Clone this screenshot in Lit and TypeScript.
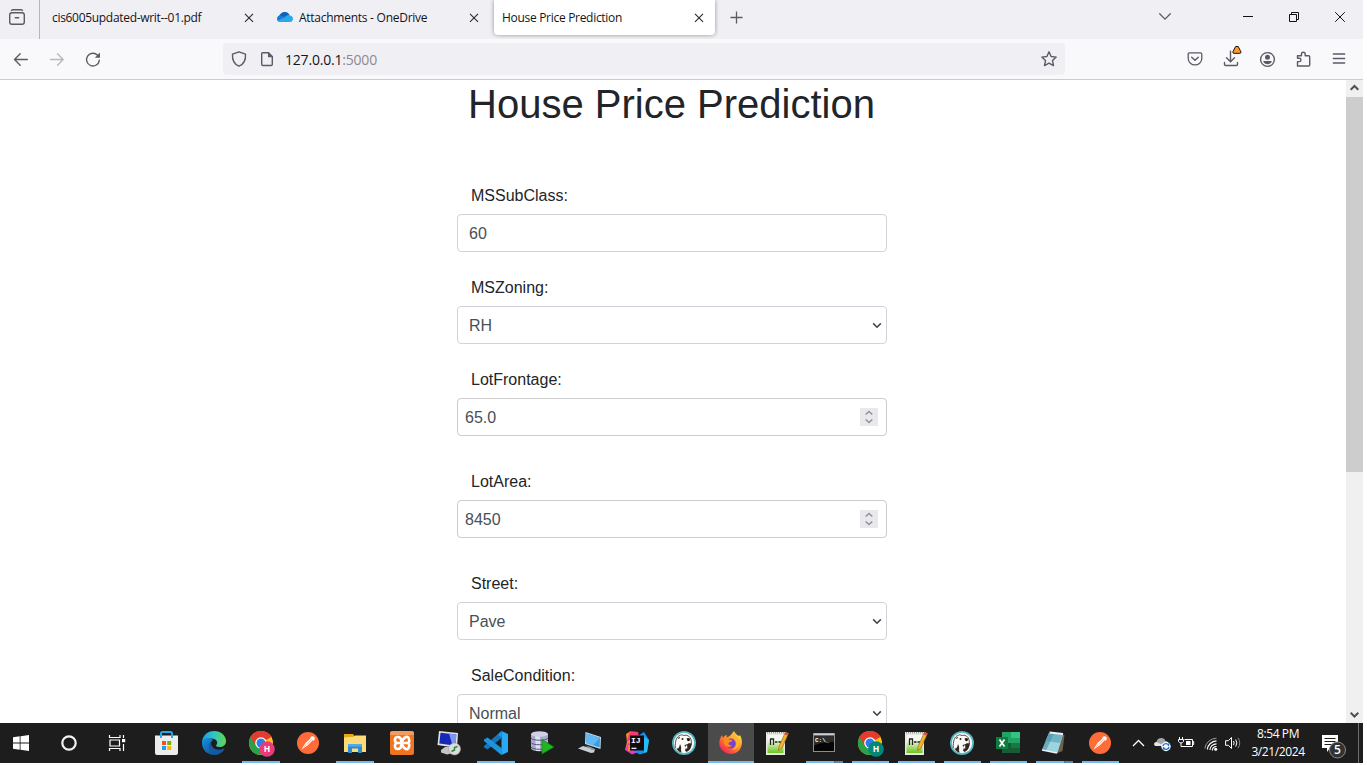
import { LitElement, html, svg, css, nothing } from "lit";
import { customElement } from "lit/decorators.js";

const icon = (w: number, h: number, body: unknown, cls = "") =>
  html`<svg class="ic ${cls}" width=${w} height=${h} viewBox="0 0 ${w} ${h}" fill="none">${body}</svg>`;

const closeGlyph = icon(10, 10, svg`<path d="M1 .8l8 8M9 .8l-8 8" stroke="#2b2a33" stroke-width="1.1"/>`);

const store = svg`
  <path d="M0 4.500h23V22a2 2 0 0 1-2 2H2a2 2 0 0 1-2-2z" fill="#ededed"/>
  <path d="M6 7V2.500Q6 1 7.500 1h8Q17 1 17 2.500V7" stroke="#23a8e8" stroke-width="2"/>
  <path d="M7 10h4v4H7z" fill="#f1511b"/><path d="M12.200 10h4v4h-4z" fill="#6bb313"/>
  <path d="M7 15h4v4H7z" fill="#1ba0ea"/><path d="M12.200 15h4v4h-4z" fill="#fbb80b"/>`;

const edge = svg`
  <defs>
    <linearGradient id="ea" x1="0" y1="8" x2="24" y2="8" gradientUnits="userSpaceOnUse"><stop stop-color="#1b9de2"/><stop offset=".5" stop-color="#2fc4c9"/><stop offset="1" stop-color="#65d848"/></linearGradient>
    <linearGradient id="eb" x1="4" y1="8" x2="16" y2="24" gradientUnits="userSpaceOnUse"><stop stop-color="#1688d8"/><stop offset="1" stop-color="#114a8b"/></linearGradient>
  </defs>
  <path d="M0 11C.5 4.500 5.500 0 12 0c7 0 12 4.600 12 10 0 4-3 6-6.500 6-3 0-4-1-3-2.300C16.500 11 14 7.500 9.500 7.500 4.500 7.500 1 10 0 13z" fill="url(#ea)"/>
  <path d="M0 12c0 7 5.400 12 12 12 4.500 0 8.300-2.400 10.300-5.700.3-.6-.2-.9-.7-.6-6 3-12.600-.2-12.600-5.200 0-1.700.9-3 2-3.800C5.500 5.500 0 8 0 12z" fill="url(#eb)"/>
  <path d="M11 8.700c-3 1.300-4.500 4-4 7.300.7 4.300 4 7.300 7.500 7.700 3.300-.7 6.200-2.700 7.800-5.400.3-.6-.2-.9-.7-.6-6 3-12.600-.2-12.600-5.200 0-1.700.9-3 2-3.800z" fill="#1558a5"/>`;

const chrome = (badge: string) => svg`
  <circle cx="12" cy="12" r="12" fill="#fbc116"/>
  <path d="M12 12L1.600 6A12 12 0 0 1 22.400 6z" fill="#e33b2e"/>
  <path d="M12 12L1.600 6A12 12 0 0 0 12 24l5.200-9z" fill="#28a148"/>
  <path d="M12 6h10.400A12 12 0 0 0 1.600 6l5.200 9z" fill="#e33b2e"/>
  <circle cx="12" cy="12" r="5.800" fill="#fff"/><circle cx="12" cy="12" r="4.500" fill="#2f7de9"/>
  <circle cx="18" cy="18" r="7.800" fill=${badge}/>
  <text x="18" y="21" text-anchor="middle" class="badge-letter" fill="#fff">H</text>`;

const postman = svg`
  <circle cx="12" cy="12" r="11" fill="#ff6c37"/>
  <path d="M5.500 18.500l4-6.500 5-4.500 2 2-5 5z" fill="#fff"/><circle cx="16.500" cy="7.500" r="2.300" fill="#fff"/>
  <path d="M8 15.800l7-6.600M14.800 7.800l2 1.500" stroke="#f9a88a" stroke-width=".8"/>`;

const explorer = svg`
  <path d="M1 3h9l1.500 2H23v16H1z" fill="#e8a712"/><path d="M1 6.500L10.500 5.800 12 4.500h11V21H1z" fill="#fddb78"/>
  <path d="M5 13h14v9h-4v-4.500H9V22H5z" fill="#2f8bd0"/><path d="M5 13h14v2.500H5z" fill="#55abe8"/>`;

const xampp = svg`
  <rect width="24" height="24" rx="2.500" fill="#ee7623"/><path d="M0 2.500Q0 0 2.500 0h19Q24 0 24 2.500V4H0z" fill="#f59b5c"/>
  <path d="M11.800 12H6.500Q4.500 10.500 5 8.200T8 6t3 2.500 1 3.500q0-2 1-3.500T16 6t3 2.200-1.500 3.800H12M11.800 12H6.500Q4.500 13.500 5 15.800T8 18t3-2.500 1-3.500q0 2 1 3.500t3 2.500 3-2.200-1.500-3.800" stroke="#fff" stroke-width="2.600" stroke-linejoin="round"/>`;

const winscp = svg`
  <path d="M2 0l19 2-1 15L.5 14z" fill="#dfe3e8"/><path d="M3.500 1.700l15.800 1.700-.8 11.400-16.200-2.300z" fill="#1528b8"/>
  <path d="M12 2.600l7.300.8-.8 11.400-3-.4z" fill="#7e97ee"/><path d="M4 19l4-3h7l1 6-6 1.500-6-2z" fill="#c3c5c7"/>
  <circle cx="17.500" cy="18" r="6" fill="#d9dedb" stroke="#9a9fa0" stroke-width=".6"/><path d="M14.500 20.500l3-1.500v-2.500l3-1" stroke="#32803b" stroke-width="1.500"/>`;

const vscode = svg`
  <path d="M17.500 0L24 3v18l-6.500 3z" fill="#29a9f2"/><path d="M17.500 0v7L3.500 18.500 0 16.500v-1.500z" fill="#1476bd"/>
  <path d="M17.500 24v-7L3.500 6.500 0 8.500V10z" fill="#1e94dc"/><path d="M17.500 0L14 3.500l3.500 3V17L14 20.500l3.500 3.500z" fill="#1f9de8"/>`;

const database = svg`
  <path d="M0 3v14c0 4.300 17 4.300 17 0V3z" fill="#a9abce"/><path d="M4 3h5v17H5z" fill="#e0e1ef"/><ellipse cx="8.500" cy="3" rx="8.500" ry="2.800" fill="#cfd0e6"/>
  <path d="M0 7c1 3 16 3 17 0M0 11.500c1 3 16 3 17 0M0 16c1 3 16 3 17 0" stroke="#55567c"/>
  <path d="M11 8.500L23 16 11 23z" fill="#21b521" stroke="#0b7a10" stroke-width=".7"/>`;

const computer = svg`
  <path d="M7.500 1L23 6l-.5 12L7 13z" fill="#c3dcec"/><path d="M8.500 2.500L22 6.800 21.700 16.500 8 12z" fill="#3b9ce0"/>
  <path d="M8.500 2.500L22 6.800l-7 7.500-7-2.300z" fill="#63b8f0"/><path d="M0 17.500l5-2.500 5 1.500 7 1.500-1 3.500-3 .5z" fill="#c6cdd3"/><path d="M7 14.500l6 1.500 4 2.500-3 .5z" fill="#8b9299"/>`;

const intellij = svg`
  <path d="M1 3l4-2.500L13 1l-2 12L0 19l2-8z" fill="#f98a2f"/><path d="M5 .5L13 1l1 5-9 3-3.500 2z" fill="#fb3a74"/>
  <path d="M0 19l3-7 9 3 1 6-6 2.500z" fill="#e03cc4"/><path d="M3 14l3 0 2 5-5 1z" fill="#fc8136"/>
  <path d="M13 5l6-4 5 8-2 12-7 2.500-6-3z" fill="#1593f3"/><path d="M19 6l5 3-2 12-3 1z" fill="#23bdf3"/>
  <path d="M5 4.500h14v15H5z" fill="#120b0e"/><path d="M6.500 17.300h5" stroke="#fff" stroke-width="1.200"/>
  <text x="6" y="12" class="ij" fill="#fff">IJ</text>`;

const dbeaver = svg`
  <circle cx="12" cy="12" r="12" fill="#53b6bf"/><circle cx="12" cy="12" r="10.200" fill="#fbfbfa"/>
  <path d="M3.300 17C3 10 4.500 5.500 8 4.500c1-1 2.500-.8 3 0 2.500-.7 5.500-.3 7 2 1.500 2 1.700 5 .7 8" stroke="#4a3b36" stroke-width=".9"/>
  <path d="M4.500 17.500c2 .5 3-1.500 3.500-4.500 1 2 1.500 3.500 1 6l.5 2.500c-2.500-.5-4-2-5-4z" fill="#35261f"/>
  <path d="M12.500 14.500c1-1.500 3-.5 4.500-2.500 1 .8 2 .5 2.500-.5.800 4-1.500 8-5 9.500l-1.500-1.500 1-3z" fill="#35261f"/>
  <path d="M14.500 7.500q2.500-1.200 3.700.8-.5 2.400-2.700 1.700z" fill="#241a16"/><circle cx="10.500" cy="8" r="1" fill="#2c211e"/>
  <path d="M6 7.500q.5-2 2-1.500L7 8z" fill="#35261f"/><path d="M14.500 14.500v3" stroke="#fff" stroke-width="1.500"/>`;

const firefox = svg`
  <defs><linearGradient id="ff" x1="20" y1="2" x2="4" y2="22" gradientUnits="userSpaceOnUse"><stop stop-color="#ffe546"/><stop offset=".45" stop-color="#ff8f24"/><stop offset="1" stop-color="#f41c5c"/></linearGradient></defs>
  <path d="M15 0c1 2.500 3 3.500 4.500 5l1.500-.8C23.500 8 24 15 20 19.500c-4 4.500-11.500 4.500-16 .5C.500 17-.5 12 1 8c.500-1.500 1-2.700 2-3.700L4 7c.700-1.600 2-2.600 4-3l-.5 2.500C10 5.500 12.500 4 15 0z" fill="url(#ff)"/>
  <circle cx="11.700" cy="12.500" r="5" fill="#7542d5"/><path d="M4.500 7.500c2-.5 5-.5 6 1l3 .5c-.5 2-2.500 2-3.500 2.500-1.500 1.800 1 3.500 3 2.500-1 3-7 3-8-2z" fill="#ff8a1e"/>
  <path d="M13 5c3 1 4.500 4 4.500 7s-2 6-5 7c7.500 0 9.500-8 6.500-12-2-2-3-3-4-5z" fill="#ffb52c"/>`;

const npp = svg`
  <defs><linearGradient id="np" x1="0" y1="3" x2="0" y2="23" gradientUnits="userSpaceOnUse"><stop offset=".3" stop-color="#f4f8ee"/><stop offset="1" stop-color="#62c20c"/></linearGradient></defs>
  <path d="M1 1h19v23H1z" fill="#e6e8e2"/><path d="M2.500 4h16v18h-16z" fill="url(#np)"/><path d="M2 1.800h17" stroke="#777" stroke-dasharray="1 1"/>
  <path d="M5.500 14V8M5 8h3.500v6M10 11h2.500M13.500 11h2.500" stroke="#222" stroke-width="1.300"/>
  <path d="M20.500 1l3 1.500L17 17l-3.500 2.500.5-4z" fill="#f1b72b" stroke="#935b15" stroke-width=".6"/><path d="M20.500 1l3 1.500-1 2.200-3-1.500z" fill="#db4b49"/>`;

const cmd = svg`
  <path d="M1 2h22v19H1z" fill="#8a8d91"/><path d="M2 2.500h20v2H2z" fill="#cbd0d6"/><path d="M2 4.700h20V20H2z" fill="#050505"/><path d="M2 4.700h20v6c-8 0-14 1-20 4z" fill="#2c2c2c"/>
  <text x="3" y="11" class="cmd" fill="#fff">C:\\_</text>`;

const excel = svg`
  <path d="M6 1h9v6H6zM6 7h9v5H6z" fill="#21a366"/><path d="M15 1h9v6h-9z" fill="#33c481"/><path d="M15 7h9v5h-9z" fill="#21a366"/>
  <path d="M6 12h18v10H6z" fill="#185c37"/><path d="M15 12h9v5h-9z" fill="#107c41"/><path d="M0 6h12v12H0z" fill="#107c41"/>
  <path d="M3.500 8.500l5 7M8.500 8.500l-5 7" stroke="#fff" stroke-width="1.700"/>`;

const notepad = svg`
  <path d="M17 2l5.500 2-2 16-5 2z" fill="#6f6048"/><path d="M7 2L21 3.500 15.500 22 0 19z" fill="#9bd3de"/><path d="M7 2L21 3.500l-3 8.500L3.500 10z" fill="#6fb4c4"/>
  <path d="M12 2.500l-8 17L0 19 7 2z" fill="#4c93a5" opacity=".6"/><path d="M7.500 1.500L21 3" stroke="#edf3f5" stroke-width="1.800"/><path d="M0 19l15 3" stroke="#eef" stroke-width="1.400"/>`;

type App = { art: unknown; mark?: "one" | "many"; kind?: string };
const apps: App[] = [
  { art: store }, { art: edge }, { art: chrome("#e93a7a"), mark: "one" }, { art: postman },
  { art: explorer, mark: "one" }, { art: xampp }, { art: winscp }, { art: vscode, mark: "one" },
  { art: database }, { art: computer }, { art: intellij }, { art: dbeaver },
  { art: firefox, mark: "one", kind: "active" }, { art: npp }, { art: cmd, mark: "many", kind: "narrow" },
  { art: chrome("#00897b"), mark: "one", kind: "narrow" }, { art: npp, mark: "one", kind: "narrow" },
  { art: dbeaver, mark: "one", kind: "narrow" }, { art: excel, mark: "one", kind: "narrow" },
  { art: notepad, mark: "many", kind: "narrow" }, { art: postman, mark: "one", kind: "narrow" },
];

type Field = { label: string; value: string; type: "text" | "select" | "number" };
const fields: Field[] = [
  { label: "MSSubClass:", value: "60", type: "text" },
  { label: "MSZoning:", value: "RH", type: "select" },
  { label: "LotFrontage:", value: "65.0", type: "number" },
  { label: "LotArea:", value: "8450", type: "number" },
  { label: "Street:", value: "Pave", type: "select" },
  { label: "SaleCondition:", value: "Normal", type: "select" },
];

@customElement("tab-strip")
class TabStrip extends LitElement {
  static styles = css`
    :host { display: flex; height: 39px; background: #f0eff4; font: 12px "Open Sans", "Noto Sans", sans-serif; color: #15141a; }
    .ic { display: block; flex: none; overflow: visible; }
    .view { width: 40px; border-right: 1px solid #b5b4bb; padding: 8px 0 0 8px; box-sizing: border-box; flex: none; }
    .tab { display: flex; align-items: center; box-sizing: border-box; width: 225px; height: 35px; padding: 0 11px 0 12px; flex: none; white-space: nowrap; }
    .fav { margin-right: 6px; }
    .name { flex: 1; letter-spacing: -0.31px; line-height: 16px; padding-top: 1px; }
    .drive { letter-spacing: -0.26px; }
    .active { width: 221px; margin-left: 4px; padding-left: 8px; background: #fff; border-radius: 0 0 4px 4px; box-shadow: 0 0 4px rgba(0, 0, 0, 0.4); }
    .active .name { letter-spacing: -0.3px; }
    .plus { margin: 11px 0 0 15px; }
    .controls { display: flex; margin-left: auto; padding: 11px 18px 0 0; gap: 36px; }
    .list { margin-right: 36px; }
  `;
  render() {
    return html`
      <div class="view">${icon(18, 18, svg`<path d="M3.500 2.500Q4 1.700 5 1.700h8q1 0 1.500.8" stroke="#5b5b66" stroke-width="1.400" stroke-linecap="round"/><rect x="1.700" y="4.700" width="14.600" height="11.600" rx="2.200" stroke="#5b5b66" stroke-width="1.400"/><path d="M7.300 9.700h3.400" stroke="#5b5b66" stroke-width="1.400" stroke-linecap="round"/>`)}</div>
      <div class="tab"><span class="name">cis6005updated-writ--01.pdf</span>${closeGlyph}</div>
      <div class="tab">
        ${icon(16, 16, svg`<path d="M1.500 8.500C2 4 5 1.800 8 2c2.500.2 4 1.600 4.700 3.500L9 8z" fill="#0a64bd"/><path d="M0 9c0-2.300 1.500-3.700 3.500-3.800L8 7l-4.500 5C1.500 12 0 11 0 9z" fill="#147bd1"/><path d="M8 7c2-2 4-2.500 5-1.500 2 .3 3 1.700 3 3.300 0 2-1.300 3.200-3 3.200H3.300C2 12 1 11.200.8 10.500z" fill="#2aa7ea"/>`, "fav")}
        <span class="name drive">Attachments - OneDrive</span>${closeGlyph}
      </div>
      <div class="tab active"><span class="name">House Price Prediction</span>${closeGlyph}</div>
      ${icon(13, 13, svg`<path d="M6.500 .5v12M.5 6.500h12" stroke="#5b5b66" stroke-width="1.300"/>`, "plus")}
      <div class="controls">
        ${icon(12, 10, svg`<path d="M.7 2.800L6 8.100l5.300-5.300" stroke="#5b5b66" stroke-width="1.300" stroke-linecap="round"/>`, "list")}
        ${icon(10, 11, svg`<path d="M0 5.500h10" stroke="#111"/>`)}
        ${icon(10, 11, svg`<path d="M.5 3.500h7v7h-7zM2.500 3V1.500h7v7H8" stroke="#111"/>`)}
        ${icon(10, 11, svg`<path d="M.2 1.200l9.600 9.600M9.800 1.200L.2 10.800" stroke="#111"/>`)}
      </div>`;
  }
}

@customElement("nav-bar")
class NavBar extends LitElement {
  static styles = css`
    :host { display: flex; align-items: center; box-sizing: border-box; height: 41px; border-bottom: 1px solid #cccccf; background: #f9f9fb; padding: 0 16px 0 13px; gap: 20px; }
    .ic { display: block; flex: none; overflow: visible; }
    .url { display: flex; align-items: center; box-sizing: border-box; width: 842px; height: 32px; margin: 0 102px; padding: 0 8px; border-radius: 4px; background: #f0eff4; font: 14px "Open Sans", "Noto Sans", sans-serif; color: #15141a; }
    .page { margin-left: 12px; }
    .addr { margin-left: 10px; flex: 1; letter-spacing: -0.2px; line-height: 20px; padding-top: 1px; }
    .port { color: #8b8a93; }
  `;
  render() {
    const s = "#5b5b66";
    return html`
      ${icon(16, 16, svg`<path d="M14.300 8.500H1.500M7.200 2.800L1.500 8.500l5.700 5.700" stroke=${s} stroke-width="1.400" stroke-linecap="round" stroke-linejoin="round"/>`)}
      ${icon(16, 16, svg`<path d="M1.500 8.500H14M8.500 2.800l5.700 5.700-5.700 5.700" stroke="#b9b9be" stroke-width="1.400" stroke-linecap="round" stroke-linejoin="round"/>`)}
      ${icon(16, 16, svg`<path d="M14.300 9.300A6.400 6.400 0 1 1 12.600 4.200" stroke=${s} stroke-width="1.400" stroke-linecap="round"/><path d="M15 1.500v5.200H9.800z" fill=${s}/>`)}
      <div class="url">
        ${icon(16, 16, svg`<path d="M8 .8L14.500 3.200c.3 4.800-1.500 10-6.500 12C3 13.200 1.200 8 1.500 3.200z" stroke=${s} stroke-width="1.400" stroke-linejoin="round"/>`)}
        ${icon(16, 16, svg`<path d="M3.500 1.700h6L13.300 5.500v7.800q0 1.200-1.200 1.200H3.900q-1.200 0-1.200-1.200V2.500q0-.8.800-.8z" stroke=${s} stroke-width="1.400"/><path d="M9 1.500v4.700h4.500z" fill=${s}/>`, "page")}
        <span class="addr">127.0.0.1<span class="port">:5000</span></span>
        ${icon(16, 16, svg`<path d="M8 .8l2.100 4.700 5.100.6-3.700 3.500 1 5L8 12.200l-4.500 2.400 1-5L.8 6.100l5.100-.6z" stroke=${s} stroke-width="1.400" stroke-linejoin="round"/>`)}
      </div>
      ${icon(16, 16, svg`<path d="M2.500 1.900h11q1.300 0 1.300 1.300v4c0 9-13.600 9-13.600 0v-4q0-1.300 1.300-1.300z" stroke=${s} stroke-width="1.300"/><path d="M4.700 6.200L8 9.300l3.300-3.100" stroke=${s} stroke-width="1.400" stroke-linecap="round"/>`)}
      ${icon(16, 16, svg`<path d="M7.500 .3v10M3.500 6.700l4 4 4-4M1.500 11.500v2q0 1 1 1h11q1 0 1-1v-2" stroke=${s} stroke-width="1.400" stroke-linecap="round"/><path d="M12.600-4.500h2.600l2.700 5.300q.2 1.500-1 1.500h-6q-1.300 0-1-1.500z" fill="#ff9a2b" stroke="#111" stroke-linejoin="round"/>`)}
      ${icon(16, 16, svg`<circle cx="8.500" cy="8.500" r="6.900" stroke=${s} stroke-width="1.400"/><circle cx="8.500" cy="6.300" r="2.500" fill=${s}/><path d="M4.300 10h8.400c0 4.200-8.400 4.200-8.400 0z" fill=${s}/>`)}
      ${icon(16, 16, svg`<path d="M2.500 15V10.600h1.800c2.200 0 2.200-3.400 0-3.400H2.500V4.700h4V3c0-2.400 3.700-2.400 3.700 0v1.700h3.500q1 0 1 1V14q0 1-1 1z" stroke=${s} stroke-width="1.400" stroke-linejoin="round"/>`)}
      ${icon(16, 16, svg`<path d="M2.300 3h11.400M2.300 7.500h11.400M2.300 12h11.400" stroke=${s} stroke-width="1.300" stroke-linecap="round"/>`)}
    `;
  }
}

@customElement("price-form")
class PriceForm extends LitElement {
  static styles = css`
    :host { display: flex; height: 643px; overflow: hidden; background: #fff; font: 16px/24px "Liberation Sans", Arial, sans-serif; color: #212529; }
    .ic { display: block; flex: none; }
    main { flex: 1; display: flex; flex-direction: column; align-items: center; padding-right: 2px; }
    h1 { margin: 0 1px 54px 0; font-size: 40px; line-height: 48px; white-space: nowrap; font-weight: 400; }
    .row { width: 430px; flex: none; margin-bottom: 22px; }
    .wide { margin-bottom: 32px; }
    .label { display: block; box-sizing: border-box; margin: 0 0 8px 14px; padding-top: 2px; height: 24px; }
    .box { display: flex; align-items: center; justify-content: space-between; box-sizing: border-box; height: 38px; padding: 0 4px 0 11px; border: 1px solid #ced4da; border-radius: 4px; color: #495057; }
    .value { padding-top: 2px; }
    .number { padding: 0 8px 0 7px; border-color: #ccc; }
    .bar { width: 17px; background: #f0f0f0; display: flex; flex-direction: column; justify-content: space-between; }
    .thumb { height: 375px; background: #cdcdcd; margin-bottom: auto; }
  `;
  render() {
    const end = (f: Field) =>
      f.type === "select"
        ? icon(10, 8, svg`<path d="M1.200 2.400L5 6.200 8.800 2.400" stroke="#3f444a" stroke-width="1.500"/>`)
        : f.type === "number"
          ? icon(18, 18, svg`<path d="M0 0h18v18H0z" fill="#e9e9ed"/><path d="M5.700 6.500L9 3.500l3.300 3M5.700 11.500l3.300 3 3.300-3" stroke="#8f8f9d" stroke-width="1.400"/>`)
          : nothing;
    return html`
      <main>
        <h1>House Price Prediction</h1>
        ${fields.map((f) => html`
          <div class="row ${f.type === "number" ? "wide" : ""}">
            <span class="label">${f.label}</span>
            <div class="box ${f.type}"><span class="value">${f.value}</span>${end(f)}</div>
          </div>`)}
      </main>
      <div class="bar">
        ${icon(17, 17, svg`<path d="M4.700 9.800l3.800-3.800 3.800 3.800" stroke="#505050" stroke-width="2"/>`)}
        <div class="thumb"></div>
        ${icon(17, 17, svg`<path d="M4.700 6.700l3.800 3.800 3.800-3.800" stroke="#505050" stroke-width="2"/>`)}
      </div>`;
  }
}

@customElement("task-bar")
class TaskBar extends LitElement {
  static styles = css`
    :host { display: flex; height: 40px; background: #1d1d1d; color: #fff; font: 12px "Open Sans", "Noto Sans", sans-serif; }
    .ic { display: block; flex: none; overflow: visible; }
    .system { display: flex; align-items: center; width: 144px; box-sizing: border-box; padding-left: 13px; flex: none; gap: 32px; }
    .app { display: flex; flex-direction: column; justify-content: space-between; box-sizing: border-box; width: 47px; height: 40px; padding: 8px 0 0 11px; flex: none; }
    .narrow, .active { width: 46px; }
    .active { background: #4b4b4b; }
    .line { height: 2px; width: 38px; margin-left: -7px; background: #76b9ed; }
    .narrow .line { width: 37px; margin-left: -6px; }
    .active .line { width: 46px; margin-left: -11px; }
    .many .line { background: linear-gradient(90deg, #76b9ed 28px, #3c5a72 28px, #5a86ad 29px); }
    .badge-letter { font: 700 8.5px "Open Sans", sans-serif; }
    .ij { font: 700 8px "Liberation Mono", monospace; }
    .cmd { font: 700 6px "Liberation Mono", monospace; }
    .tray { display: flex; align-items: center; padding-left: 9px; flex: 1; }
    .cloud { margin-left: 9px; }
    .battery { margin-left: 7px; }
    .wifi { margin-left: 10px; }
    .sound { margin-left: 7px; }
    .clock { width: 66px; margin-left: 3px; text-align: center; line-height: 18px; letter-spacing: -0.4px; white-space: nowrap; flex: none; }
    .note { margin-left: 10px; }
    .peek { margin-left: auto; margin-right: 4px; width: 1px; height: 40px; background: #6d6d6d; }
    .count { font: 600 12px "Open Sans", sans-serif; }
  `;
  render() {
    return html`
      <div class="system">
        ${icon(16, 16, svg`<path d="M0 2.300L6.700 1.300v6.200H0zM7.500 1.200L16 0v7.500H7.500zM0 8.400h6.700v6.300L0 13.700zM7.500 8.400H16V16l-8.500-1.200z" fill="#fff"/>`)}
        ${icon(16, 16, svg`<circle cx="8" cy="8" r="6.700" stroke="#f3f3f3" stroke-width="2.200"/>`)}
        ${icon(17, 16, svg`<path d="M.5 0v2.500h10.500V0M.5 16v-2.500h10.500V16M1 5h9.500v6H1zM14.500 0v3M14.500 9v7" stroke="#fff" stroke-width="1.200"/><path d="M13 4h3.200v3.200H13z" fill="#fff"/>`)}
      </div>
      ${apps.map((a) => html`
        <div class="app ${a.kind ?? ""} ${a.mark ?? ""}">
          ${icon(24, 24, a.art)}${a.mark ? html`<div class="line"></div>` : nothing}
        </div>`)}
      <div class="tray">
        ${icon(13, 10, svg`<path d="M1 8l5.500-5.500L12 8" stroke="#fff" stroke-width="1.300"/>`)}
        ${icon(17, 16, svg`<path d="M1.500 11c-2-1-1.500-4 1-4 .5-3 3-4.500 5.500-4 2 .3 3 1.500 3.300 3 1.700 0 2.700 1 2.700 2.500V11z" fill="#a5a5a5"/><path d="M1.500 11c-2-1-1.500-4 1-4L11 11z" fill="#e6e6e6"/><circle cx="12" cy="11.500" r="4.700" fill="#f4f8fc"/><path d="M9 11c.6-2.700 4-3.200 5.500-1l.5-1.500M15 12c-.6 2.700-4 3.200-5.500 1L9 14.500" stroke="#1979d0" stroke-width="1.400"/>`, "cloud")}
        ${icon(16, 14, svg`<path d="M6.500 3.500h8v7h-8M14.500 5.500h1.200v3h-1.200M1.500 1v2.500M4.500 1v2.500M.5 3.500h5v2q-1 1.500-2.500 1.500T.5 5.500zM3 7v3.500h4" stroke="#fff"/><path d="M8 5h4.500v4H8z" fill="#fff"/>`, "battery")}
        ${icon(14, 14, svg`<path d="M.8 12.500A12 12 0 0 1 12.500 2.200" stroke="#999"/><path d="M3.300 13.500a9.500 9.500 0 0 1 9.200-8.600M5.800 14a6.700 6.700 0 0 1 6.700-6.200M8.300 14.500A4.300 4.300 0 0 1 12.500 10.500" stroke="#fff" stroke-width="1.200"/><circle cx="11.700" cy="13.200" r="1.500" fill="#fff"/>`, "wifi")}
        ${icon(17, 14, svg`<path d="M.6 4.700h2.700L6.500 1.500v11L3.300 9.300H.6z" stroke="#fff"/><path d="M8.500 5q1.300 2 0 4M10.700 3.500q2.300 3.500 0 7" stroke="#fff"/><path d="M13 1.800q3.500 5.200 0 10.400" stroke="#8a8a8a"/>`, "sound")}
        <div class="clock"><div>8:54 PM</div><div>3/21/2024</div></div>
        ${icon(25, 24, svg`<path d="M1 4h16v13H9l-3 4v-4H1z" fill="#fff"/><path d="M3.500 7.500h11M3.500 10.500h11M3.500 13.500h7" stroke="#1d1d1d"/><circle cx="16.500" cy="19" r="8" fill="#323232" stroke="#888"/><text x="16.500" y="23.300" text-anchor="middle" class="count" fill="#fff">5</text>`, "note")}
        <div class="peek"></div>
      </div>`;
  }
}

@customElement("app-root")
class AppRoot extends LitElement {
  static styles = css`
    :host { display: block; width: 1367px; height: 765px; background: #fff; overflow: hidden; }
    .desktop { display: flex; flex-direction: column; width: 1363px; height: 763px; }
  `;
  render() {
    return html`<div class="desktop">
      <tab-strip></tab-strip>
      <nav-bar></nav-bar>
      <price-form></price-form>
      <task-bar></task-bar>
    </div>`;
  }
}
